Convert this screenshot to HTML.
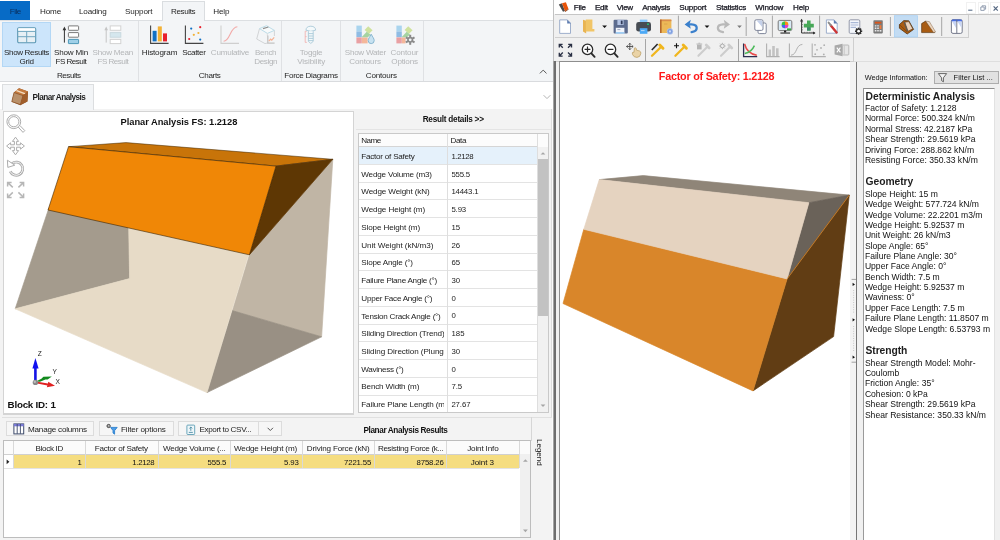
<!DOCTYPE html><html><head><meta charset="utf-8"><title>Planar Analysis</title><style>
html,body{margin:0;padding:0;}
body{width:1000px;height:540px;overflow:hidden;background:#fff;position:relative;font-family:"Liberation Sans",sans-serif;}
#w{position:absolute;left:0;top:0;width:1000px;height:540px;overflow:hidden;will-change:transform;}
.b{position:absolute;box-sizing:border-box;display:block;}
.t{position:absolute;white-space:pre;line-height:1;font-family:"Liberation Sans",sans-serif;}
.r{transform-origin:0 0;transform:rotate(90deg);}
</style></head><body><div id="w">
<div class="b" style="left:0px;top:0px;width:553px;height:540px;background:#f3f3f3;"></div>
<div class="b" style="left:0px;top:0px;width:553px;height:21px;background:#ffffff;"></div>
<div class="b" style="left:0px;top:1px;width:30px;height:19.5px;background:#076bc6;"></div>
<div class="b" style="left:0px;top:20px;width:553px;height:62px;background:#f3f5f7;border-top:1px solid #dcdfe2;border-bottom:1px solid #d9dbde;"></div>
<div class="b" style="left:162px;top:1px;width:42.5px;height:20px;background:#f3f5f7;border:1px solid #dadde0;border-bottom:none;"></div>
<div class="b" style="left:2px;top:22px;width:49.2px;height:44.6px;background:#cce5fb;border:1px solid #b3d7f5;"></div>
<div class="b" style="left:137.6px;top:21px;width:1px;height:60px;background:#dfe1e4;"></div>
<div class="b" style="left:281.4px;top:21px;width:1px;height:60px;background:#dfe1e4;"></div>
<div class="b" style="left:340.1px;top:21px;width:1px;height:60px;background:#dfe1e4;"></div>
<div class="b" style="left:422.6px;top:21px;width:1px;height:60px;background:#dfe1e4;"></div>
<svg class="b" style="left:16px;top:26px" width="22" height="19" viewBox="0 0 22 19"><rect x="1.7" y="1.7" width="18" height="15" rx="1.2" fill="#e7f0f5" stroke="#5a96b2" stroke-width="1.1"/><rect x="2.3" y="2.3" width="16.8" height="2.6" fill="#fff"/><path d="M1.7 5.4H19.7M1.7 10.7H19.7M10.7 5.4V16.7" stroke="#6fa6c0" stroke-width="1" fill="none"/></svg>
<svg class="b" style="left:60px;top:24px" width="22" height="22" viewBox="0 0 22 22"><path d="M4.4 18.6V4.2" stroke="#333" stroke-width="1"/><path d="M2.6 6.2L4.4 2.6L6.2 6.2Z" fill="#333"/><rect x="8.4" y="1.9" width="10.2" height="4.4" rx="0.6" fill="#fff" stroke="#7a7a7a" stroke-width="1"/><rect x="8.4" y="8.6" width="10.2" height="4.6" rx="0.6" fill="#fff" stroke="#7a7a7a" stroke-width="1"/><rect x="8.4" y="15.4" width="10.2" height="4.2" rx="0.3" fill="#9fd0e8" stroke="#4d98b8" stroke-width="1"/></svg>
<svg class="b" style="left:102px;top:24px" width="22" height="22" viewBox="0 0 22 22"><path d="M4.2 18.6V4.2" stroke="#c4c4c4" stroke-width="1"/><path d="M2.4 6.2L4.2 2.6L6 6.2Z" fill="#c4c4c4"/><rect x="8.2" y="1.9" width="10.6" height="4.4" fill="#fff" stroke="#d2d2d2" stroke-width="1"/><rect x="8.2" y="8.6" width="10.6" height="4.6" fill="#d5e7ee" stroke="#c9d9df" stroke-width="1"/><rect x="8.2" y="15.4" width="10.6" height="4.2" fill="#fff" stroke="#d2d2d2" stroke-width="1"/></svg>
<svg class="b" style="left:149px;top:24px" width="22" height="22" viewBox="0 0 22 22"><path d="M1.6 1.5V19.4H19.6" stroke="#444" stroke-width="1.1" fill="none"/><rect x="3.6" y="6.8" width="4" height="10.6" fill="#1170c4"/><rect x="8.8" y="2.4" width="4" height="15" fill="#f3b134"/><rect x="14" y="9.4" width="4" height="8" fill="#e8212d"/></svg>
<svg class="b" style="left:184px;top:24px" width="22" height="22" viewBox="0 0 22 22"><path d="M1.4 1.5V19.4H19.4" stroke="#444" stroke-width="1.1" fill="none"/><circle cx="7.2" cy="4.6" r="1.1" fill="#1170c4"/><circle cx="16.2" cy="3.2" r="1.1" fill="#e8212d"/><circle cx="9.8" cy="10.8" r="1.1" fill="#f3b134"/><circle cx="14.4" cy="9" r="1.1" fill="#f3b134"/><circle cx="5.2" cy="15" r="1.1" fill="#e8212d"/><circle cx="16.2" cy="15.6" r="1.1" fill="#1170c4"/></svg>
<svg class="b" style="left:219px;top:24px" width="22" height="22" viewBox="0 0 22 22"><path d="M2 1.5V19.4H20" stroke="#cfcfcf" stroke-width="1.1" fill="none"/><path d="M4.6 17.2C11.5 17 10.5 3.4 18.4 2.8" stroke="#f2aaa8" stroke-width="1.1" fill="none"/></svg>
<svg class="b" style="left:255px;top:24px" width="22" height="22" viewBox="0 0 22 22"><path d="M4.5 4.6L1.7 15L10 19.6L12.6 19" stroke="#d2d4d6" stroke-width="1" fill="none"/><path d="M19.4 6.4V12" stroke="#d2d4d6" stroke-width="1"/><path d="M4.5 4.6L11.5 1.7L19.4 6.4L12.4 9.4Z" stroke="#bcdce8" stroke-width="1" fill="#f8fafb"/><path d="M12.4 9.4V12" stroke="#d9dbdd" stroke-width="0.9"/><path d="M8 4.6L13.4 3" stroke="#8e8e8e" stroke-width="1.3"/><path d="M12.8 11.4V19.2H19.6" stroke="#c4c4c4" stroke-width="1.3" fill="none"/><path d="M13.8 17.2L15.6 15.2L16.8 16.2L19.2 13.4" stroke="#f4b295" stroke-width="1.2" fill="none"/></svg>
<svg class="b" style="left:301.4px;top:24px" width="18" height="22" viewBox="0 0 18 22"><path d="M5.8 7.2H4.2V18.4H5.8M4.2 12.6H5.6" stroke="#f1b4b2" stroke-width="0.9" fill="none"/><path d="M5 6.2Q5 2.4 9.8 2.2Q14.6 2.4 14.6 6.2Q9.8 8.4 5 6.2Z" fill="#f4f9fb" stroke="#a9cad8" stroke-width="0.9"/><path d="M7.4 7.2V17.4L9.8 19.4L12.2 17.4V7.2M7.4 9.6H12.2M7.4 12H12.2M7.4 14.4H12.2M7.4 16.6H12.2" stroke="#a9cad8" stroke-width="0.9" fill="#f4f9fb"/></svg>
<svg class="b" style="left:355px;top:24px" width="22" height="22" viewBox="0 0 22 22"><rect x="1.4" y="1.6" width="5.4" height="5.6" fill="#a9d4ee"/><rect x="1.4" y="7.4" width="5.4" height="5.8" fill="#8fbce4"/><rect x="1.4" y="13.4" width="5.4" height="6" fill="#e9a0a3"/><rect x="7" y="13.4" width="5.6" height="6" fill="#f4b79a"/><path d="M7 12.8L12 7.4L15.6 10.8L12.8 13.2H7Z" fill="#a5d3a2"/><path d="M9.6 6L13.2 2.2L17.6 6.2L14 9.8Z" fill="#cfe29e"/><path d="M16.2 10.2C17.6 13 19.2 14.6 19.2 16.6A3 3 0 0 1 13.2 16.6C13.2 14.6 14.8 13 16.2 10.2Z" fill="#c7e2f1" stroke="#7fb0cc" stroke-width="0.9"/></svg>
<svg class="b" style="left:394.5px;top:24px" width="22" height="22" viewBox="0 0 22 22"><rect x="1.4" y="1.6" width="5.4" height="5.6" fill="#a9d4ee"/><rect x="1.4" y="7.4" width="5.4" height="5.8" fill="#8fbce4"/><rect x="1.4" y="13.4" width="5.4" height="6" fill="#e9a0a3"/><rect x="7" y="13.4" width="3.6" height="6" fill="#f4b79a"/><path d="M7 12.8L12 7.4L15 10.4L12 13.2H7Z" fill="#a5d3a2"/><path d="M9.6 6L13.2 2.2L17.6 6.2L14 9.8Z" fill="#cfe29e"/><g transform="translate(15.2,15.8)" fill="#8a8a8a"><circle r="3"/><path d="M-1 -5H1V5H-1Z"/><path d="M-1 -5H1V5H-1Z" transform="rotate(60)"/><path d="M-1 -5H1V5H-1Z" transform="rotate(120)"/><circle r="1.4" fill="#f3f5f7"/></g></svg>
<svg class="b" style="left:538px;top:66px" width="11" height="11" viewBox="0 0 11 11"><path d="M1.9 7.4L5.2 4.1L8.5 7.4" stroke="#555" stroke-width="1" fill="none"/></svg>
<div class="b" style="left:0px;top:82px;width:553px;height:27.4px;background:#ffffff;"></div>
<svg class="b" style="left:541px;top:92px" width="12" height="10" viewBox="0 0 12 10"><path d="M2.6 3.2L6 6.6L9.4 3.2" stroke="#b4b4b4" stroke-width="1" fill="none"/></svg>
<div class="b" style="left:2px;top:84px;width:91.8px;height:25.5px;background:#f3f5f7;border:1px solid #dcdee0;border-bottom:none;"></div>
<svg class="b" style="left:10px;top:86px" width="20" height="22" viewBox="0 0 20 22"><path d="M4 6.6L9 2.2L18 5.6L17.4 15.6L10.4 19.2L1.6 15.8Z" fill="#8c4f22"/><path d="M4 6.6L9 2.2L18 5.6L13 9.6Z" fill="#c47a3e"/><path d="M5.8 5L7 3.9L15.6 7.2L14.4 8.3Z" fill="#f3dcc0"/><path d="M4 6.6L13 9.6L10.4 18.6L1.8 15.6Z" fill="#b9916b" stroke="#8c4f22" stroke-width="0.6"/><path d="M13 9.6L18 5.6L17.4 15.6L10.4 18.8Z" fill="#a05e2c"/></svg>
<div class="b" style="left:2.5px;top:110.6px;width:351.5px;height:303.4px;background:#ffffff;border:1px solid #d4d4d4;"></div>
<svg class="b" style="left:0px;top:0px" width="553" height="540" viewBox="0 0 553 540">
<g fill="none" stroke="#adadad" stroke-width="1">
<circle cx="13.8" cy="121.7" r="6.9"/><circle cx="13.8" cy="121.7" r="5.1"/><path d="M18.2 127L23 132.4L24.8 130.6L19.8 125.4"/>
<path d="M15.5 137.2L18.6 141.4H16.6V144.8H20.4V142.8L24.4 146L20.4 149.2V147.2H16.6V150.6H18.6L15.5 154.8L12.4 150.6H14.4V147.2H10.6V149.2L6.6 146L10.6 142.8V144.8H14.4V141.4H12.4Z"/>
<path d="M12 163.6A6.6 6.6 0 1 1 10.2 171.4" stroke-width="2.8"/><path d="M12 163.6A6.6 6.6 0 1 1 10.2 171.4" stroke="#fff" stroke-width="0.9"/>
<path d="M7.4 160.2L7.8 167.4L14.8 165.2Z" fill="#fff"/>
</g>
<g fill="none" stroke="#b6b6b6" stroke-width="1.5">
<path d="M7.6 186.4V182.4H11.6M7.8 182.6L12.8 187.4"/><path d="M19.6 182.4H23.6V186.4M23.4 182.6L18.4 187.4"/>
<path d="M7.6 193.4V197.4H11.6M7.8 197.2L12.8 192.4"/><path d="M19.6 197.4H23.6V193.4M23.4 197.2L18.4 192.4"/>
</g>
<polygon points="48.9,208 128.7,226 129.6,278.6 15.2,308.8" fill="#a49b8d" stroke="#a49b8d" stroke-width="0.7" stroke-linejoin="round"/>
<polygon points="332.8,159.3 321.6,336.8 232.4,310.6 249.4,254.8" fill="#c0b5a5" stroke="#c0b5a5" stroke-width="0.7" stroke-linejoin="round"/>
<polygon points="232.4,310.6 321.6,336.8 207,392.6" fill="#999084" stroke="#999084" stroke-width="0.7" stroke-linejoin="round"/>
<polygon points="128.7,226 249.4,252 207,392.6 15.2,308.8 129.6,278.6" fill="#e7dbc7" stroke="#e7dbc7" stroke-width="0.7" stroke-linejoin="round"/>
<polygon points="68.5,146.7 126,142.6 332.8,159.3 276,166.1" fill="#c87409" stroke="#3a2404" stroke-width="0.5"/>
<polygon points="276,166.1 332.8,159.3 249.4,254.8" fill="#5e3704" stroke="#5e3704" stroke-width="0.7" stroke-linejoin="round"/>
<polygon points="68.5,146.7 276,166.1 249.4,254.8 48,210" fill="#f08706" stroke="#3a2404" stroke-width="0.6"/>

<path d="M35.4 382V367" stroke="#1414e6" stroke-width="2.6"/><path d="M32.4 368.6L35.4 358L38.6 368.6Z" fill="#1010f0"/>
<path d="M36 381.4L41.4 378.8L43.4 376.8L51.8 376.4L47.6 379.6L45.4 379.4L40 381.8Z" fill="#128a1e"/>
<path d="M36 381.6L48 383.4L48.2 381.8L55 385.8L46.8 387.2L47.4 385.4L36 383.2Z" fill="#e02222"/>
<circle cx="35.4" cy="382.4" r="2.7" fill="#8a8a8a"/><circle cx="34.8" cy="381.8" r="1.2" fill="#bdbdbd"/>
</svg>
<div class="b" style="left:356px;top:129px;width:195.6px;height:1px;background:#e4e4e4;"></div>
<div class="b" style="left:551.4px;top:109.4px;width:0.9px;height:309px;background:#dcdcdc;"></div>
<div class="b" style="left:552.2px;top:109.4px;width:0.8px;height:430.6px;background:#fbfbfb;"></div>
<div class="b" style="left:358px;top:132.8px;width:190.60000000000002px;height:280.09999999999997px;background:#ffffff;border:1px solid #c9c9c9;"></div>
<div class="b" style="left:359px;top:133.8px;width:188.60000000000002px;height:13px;background:#fcfcfc;"></div>
<div class="b" style="left:359px;top:146.3px;width:179px;height:18.233px;background:#e5f1fb;"></div>
<div class="b" style="left:359px;top:146.3px;width:179.4px;height:1px;background:#d5d5d5;"></div>
<div class="b" style="left:359px;top:164.03300000000002px;width:179.4px;height:1px;background:#e3e3e3;"></div>
<div class="b" style="left:359px;top:181.76600000000002px;width:179.4px;height:1px;background:#e3e3e3;"></div>
<div class="b" style="left:359px;top:199.49900000000002px;width:179.4px;height:1px;background:#e3e3e3;"></div>
<div class="b" style="left:359px;top:217.23200000000003px;width:179.4px;height:1px;background:#e3e3e3;"></div>
<div class="b" style="left:359px;top:234.96500000000003px;width:179.4px;height:1px;background:#e3e3e3;"></div>
<div class="b" style="left:359px;top:252.698px;width:179.4px;height:1px;background:#e3e3e3;"></div>
<div class="b" style="left:359px;top:270.43100000000004px;width:179.4px;height:1px;background:#e3e3e3;"></div>
<div class="b" style="left:359px;top:288.164px;width:179.4px;height:1px;background:#e3e3e3;"></div>
<div class="b" style="left:359px;top:305.89700000000005px;width:179.4px;height:1px;background:#e3e3e3;"></div>
<div class="b" style="left:359px;top:323.63px;width:179.4px;height:1px;background:#e3e3e3;"></div>
<div class="b" style="left:359px;top:341.36300000000006px;width:179.4px;height:1px;background:#e3e3e3;"></div>
<div class="b" style="left:359px;top:359.096px;width:179.4px;height:1px;background:#e3e3e3;"></div>
<div class="b" style="left:359px;top:376.829px;width:179.4px;height:1px;background:#e3e3e3;"></div>
<div class="b" style="left:359px;top:394.562px;width:179.4px;height:1px;background:#e3e3e3;"></div>
<div class="b" style="left:447px;top:133.8px;width:1px;height:278.09999999999997px;background:#dedede;"></div>
<div class="b" style="left:537px;top:133.8px;width:1px;height:278.09999999999997px;background:#dedede;"></div>
<div class="b" style="left:538px;top:146.8px;width:10px;height:265.4px;background:#f1f1f1;"></div>
<div class="b" style="left:538.2px;top:159.3px;width:9.4px;height:156.8px;background:#c2c2c2;"></div>
<svg class="b" style="left:538px;top:149px" width="10" height="8" viewBox="0 0 10 8"><path d="M2.6 5.6L5 3.2L7.4 5.6Z" fill="#a6a6a6"/></svg>
<svg class="b" style="left:538px;top:402px" width="10" height="8" viewBox="0 0 10 8"><path d="M2.6 2.6L5 5L7.4 2.6Z" fill="#a6a6a6"/></svg>
<div class="b" style="left:2.5px;top:413.5px;width:351.5px;height:1px;background:#d4d4d4;"></div>
<div class="b" style="left:2px;top:417px;width:550px;height:1px;background:#e0e0e0;"></div>
<div class="b" style="left:5.6px;top:421.2px;width:88.80000000000001px;height:15.2px;background:#f6f6f6;border:1px solid #dcdcdc;"></div>
<div class="b" style="left:98.6px;top:421.2px;width:75.0px;height:15.2px;background:#f6f6f6;border:1px solid #dcdcdc;"></div>
<div class="b" style="left:177.8px;top:421.2px;width:81.59999999999997px;height:15.2px;background:#f6f6f6;border:1px solid #dcdcdc;"></div>
<div class="b" style="left:258.4px;top:421.2px;width:24.0px;height:15.2px;background:#f6f6f6;border:1px solid #dcdcdc;"></div>
<svg class="b" style="left:13px;top:423.4px" width="12" height="12" viewBox="0 0 12 12"><rect x="0.9" y="0.9" width="9.8" height="10" fill="#fff" stroke="#3c4a6a" stroke-width="1"/><rect x="0.9" y="0.9" width="9.8" height="2.4" fill="#7a7ad6"/><path d="M4.2 1V10.8M7.4 1V10.8" stroke="#3c4a6a" stroke-width="0.9"/></svg>
<svg class="b" style="left:106px;top:423px" width="12" height="12" viewBox="0 0 12 12"><circle cx="2.6" cy="3" r="1.6" fill="none" stroke="#333" stroke-width="1"/><circle cx="2.6" cy="3" r="0.5" fill="#333"/><path d="M4.6 4.4H11.2L8.6 7.6V11.2L7 10V7.6Z" fill="#4f9de6" stroke="#1f78cc" stroke-width="0.8"/></svg>
<svg class="b" style="left:185.6px;top:423.6px" width="10" height="12" viewBox="0 0 10 12"><rect x="0.9" y="1.1" width="7.8" height="9.4" rx="0.8" fill="#eef6f9" stroke="#4a93ac" stroke-width="0.8"/><path d="M4.8 3V6.8M3.4 4.4L4.8 3L6.2 4.4M2.8 8.4H6.8" stroke="#3a7f9a" stroke-width="0.8" fill="none"/></svg>
<svg class="b" style="left:266px;top:426.4px" width="9" height="7" viewBox="0 0 9 7"><path d="M1.6 1.8L4.3 4.5L7 1.8" stroke="#444" stroke-width="0.9" fill="none"/></svg>
<div class="b" style="left:2.8px;top:440.2px;width:528.6px;height:98.19999999999999px;background:#ffffff;border:1px solid #bdbdbd;"></div>
<div class="b" style="left:3.8px;top:441.2px;width:526.6px;height:13px;background:#fbfbfb;"></div>
<div class="b" style="left:3.8px;top:454px;width:526.6px;height:0.8px;background:#d0d0d0;"></div>
<div class="b" style="left:12.6px;top:454.6px;width:506.19999999999993px;height:13.8px;background:#f5dd80;"></div>
<div class="b" style="left:3.8px;top:468.2px;width:515.0px;height:0.8px;background:#e3e3e3;"></div>
<div class="b" style="left:12.6px;top:441.2px;width:1px;height:27.2px;background:#d9d9d9;"></div>
<div class="b" style="left:85.4px;top:441.2px;width:1px;height:27.2px;background:#d9d9d9;"></div>
<div class="b" style="left:157.5px;top:441.2px;width:1px;height:27.2px;background:#d9d9d9;"></div>
<div class="b" style="left:229.7px;top:441.2px;width:1px;height:27.2px;background:#d9d9d9;"></div>
<div class="b" style="left:301.9px;top:441.2px;width:1px;height:27.2px;background:#d9d9d9;"></div>
<div class="b" style="left:373.9px;top:441.2px;width:1px;height:27.2px;background:#d9d9d9;"></div>
<div class="b" style="left:446.3px;top:441.2px;width:1px;height:27.2px;background:#d9d9d9;"></div>
<div class="b" style="left:518.8px;top:441.2px;width:1px;height:27.2px;background:#d9d9d9;"></div>
<div class="b" style="left:519.6px;top:441.2px;width:10.8px;height:96px;background:#f0f0f0;"></div>
<div class="b" style="left:519.6px;top:441.2px;width:10.8px;height:13px;background:#fbfbfb;"></div>
<svg class="b" style="left:519.6px;top:456px" width="11" height="8" viewBox="0 0 11 8"><path d="M3 5.8L5.4 3.2L7.8 5.8Z" fill="#a6a6a6"/></svg>
<svg class="b" style="left:519.6px;top:527px" width="11" height="8" viewBox="0 0 11 8"><path d="M3 2.6L5.4 5.2L7.8 2.6Z" fill="#a6a6a6"/></svg>
<svg class="b" style="left:5px;top:458px" width="6" height="8" viewBox="0 0 6 8"><path d="M1.6 1.4L4.4 3.8L1.6 6.2Z" fill="#222"/></svg>
<div class="b" style="left:530.6px;top:417px;width:0.9px;height:24px;background:#d6d6d6;"></div>
<div class="b" style="left:553px;top:0px;width:447px;height:540px;background:#f0f0f0;"></div>
<div class="b" style="left:553px;top:0px;width:447px;height:14.4px;background:#ffffff;"></div>
<div class="b" style="left:552.8px;top:0px;width:1.4px;height:540px;background:#c2c2c2;"></div>
<div class="b" style="left:554.6px;top:14.4px;width:445.4px;height:0.9px;background:#c6c6c6;"></div>
<div class="b" style="left:554.6px;top:37.4px;width:414.4px;height:0.9px;background:#cfcfcf;"></div>
<div class="b" style="left:968.4px;top:15px;width:0.9px;height:23px;background:#cfcfcf;"></div>
<div class="b" style="left:554.6px;top:61px;width:299px;height:1px;background:#cfcfcf;"></div>
<div class="b" style="left:853.2px;top:38.4px;width:0.9px;height:23px;background:#cfcfcf;"></div>
<div class="b" style="left:854px;top:61.3px;width:146px;height:0.9px;background:#dedede;"></div>
<svg class="b" style="left:557px;top:0px" width="14" height="14" viewBox="0 0 14 14"><path d="M1.8 4.6L5 3.3L8 11.1L6 11.8Z" fill="#4a4a4a"/><path d="M5 3.3L8.9 2.3L11.4 8.7L8 11.2Z" fill="#e8540a"/><path d="M8 11.2L11.4 8.7L11.6 9.6L8.2 12Z" fill="#8a3a10"/></svg>
<div class="b" style="left:965.6px;top:2px;width:10.8px;height:11.8px;background:#ffffff;border:1px solid #f1f1f1;"></div>
<div class="b" style="left:977.8px;top:2px;width:10.8px;height:11.8px;background:#ffffff;border:1px solid #f1f1f1;"></div>
<div class="b" style="left:989.8px;top:2px;width:10.8px;height:11.8px;background:#ffffff;border:1px solid #f1f1f1;"></div>
<svg class="b" style="left:965px;top:1px" width="35" height="13" viewBox="0 0 35 13"><path d="M3.2 9.2H7.4" stroke="#5b6f8a" stroke-width="1.1"/><path d="M15.8 6H19.2V9.4H15.8Z M17 5.8V4.8H20.6V8.2H19.6" stroke="#7d8ca2" stroke-width="0.8" fill="none"/><path d="M28.6 5.4L32.8 9.6M32.8 5.4L28.6 9.6" stroke="#52657f" stroke-width="1.2"/></svg>
<div class="b" style="left:552.6px;top:61.2px;width:1px;height:479px;background:#a4a4a4;"></div>
<div class="b" style="left:554.1px;top:61.2px;width:1.6px;height:479px;background:#6e6e6e;"></div>
<div class="b" style="left:558.6px;top:61.3px;width:291.8px;height:478.7px;background:#ffffff;border:1.2px solid #8e8e8e;border-bottom:none;border-right:none;"></div>
<div class="b" style="left:850.4px;top:62px;width:5.4px;height:478px;background:#f3f3f3;"></div>
<div class="b" style="left:855.9px;top:62.4px;width:1.3px;height:478px;background:#767676;"></div>
<svg class="b" style="left:553px;top:0px" width="447" height="540" viewBox="553 0 447 540">
<path d="M559.7 19.9H567.4L570.5 23V33.4H559.7Z" fill="#fff" stroke="#93a6c6" stroke-width="0.9"/><path d="M567.2 19.8L570.8 23.4H567.2Z" fill="#5c7bb0"/>
<path d="M583 19.8L586.2 20.8V33.6L583 31.4Z" fill="#e9b452"/><path d="M585.8 19.6H592.4V29H594.4V31.4H585.8Z" fill="#f1c567"/>
<path d="M602.2 25.4H607L604.6 28Z" fill="#111"/>
<rect x="613.6" y="19.8" width="14.2" height="13.8" rx="1" fill="#5d6c8e"/><rect x="617.4" y="19.8" width="6.2" height="5.2" fill="#b4c4e4"/><rect x="620.8" y="20.6" width="1.8" height="3.6" fill="#2f3a58"/><rect x="615.8" y="27.8" width="8.6" height="5.8" fill="#f2f5fb"/><rect x="615.8" y="32.2" width="8.6" height="1.4" fill="#8cc4f2"/><path d="M617.4 29.6H620.4" stroke="#8a96b0" stroke-width="0.8"/>
<rect x="639.8" y="19.6" width="7.6" height="3.4" fill="#86c6fa"/><rect x="636.2" y="22" width="14.8" height="9.6" rx="2.4" fill="#474c53"/><rect x="639.8" y="28.2" width="7.6" height="5.6" fill="#4ba9f6"/><path d="M641 30.6H644.6" stroke="#cfe6fb" stroke-width="0.8"/><circle cx="648" cy="24.2" r="0.9" fill="#1fd27a"/>
<rect x="660" y="19.6" width="11.4" height="13.4" rx="0.8" fill="#ecb857"/><rect x="660" y="19.6" width="11.4" height="1.6" fill="#d98c4e"/><rect x="660" y="19.6" width="1.6" height="13.4" fill="#b4682c"/><path d="M664 24H667.4" stroke="#d9a04a" stroke-width="0.8"/><circle cx="670" cy="31.4" r="2.9" fill="#7f9fe0" stroke="#b9cbf0" stroke-width="0.6"/><circle cx="670" cy="31.4" r="1.1" fill="#c9d8f6"/>
<path d="M678.4 15.6V37.4" stroke="#a6a6a6" stroke-width="1"/>
<path d="M690.8 19.8L684.6 24.4L690.8 28.8L690 25.6L688.6 24.4L690 23Z" fill="#3b80cc"/><path d="M688 24.3H691.6Q696.7 24.5 696.7 28.1Q696.7 31.6 691.6 32.1" stroke="#3b80cc" stroke-width="2.3" fill="none" stroke-linecap="round"/>
<path d="M704.6 25.4H709.4L707 28Z" fill="#111"/>
<path d="M723.8 19.8L730 24.4L723.8 28.8L724.6 25.6L726 24.4L724.6 23Z" fill="#b9b9b9"/><path d="M726.6 24.3H723Q717.9 24.5 717.9 28.1Q717.9 31.6 723 32.1" stroke="#b9b9b9" stroke-width="2.3" fill="none" stroke-linecap="round"/>
<path d="M737.2 25.4H741.8L739.5 28Z" fill="#7a7a7a"/>
<path d="M746.2 17V36" stroke="#a6a6a6" stroke-width="1"/>
<rect x="758" y="23" width="8.2" height="10.6" rx="1.4" fill="#fff" stroke="#70788f" stroke-width="0.9"/><rect x="754.8" y="19.8" width="8.2" height="10.6" rx="1.4" fill="#fff" stroke="#70788f" stroke-width="0.9"/><path d="M756.6 20.6H762.2V27Z" fill="#c4d0ea"/>
<path d="M772.4 15.6V37.4" stroke="#a6a6a6" stroke-width="1"/>
<rect x="778.2" y="20.4" width="13.6" height="10.2" rx="1.4" fill="#d9ebf7" stroke="#777" stroke-width="1"/>
<circle cx="785" cy="24.9" r="3.3" fill="#ffd21c"/><path d="M785 24.9L785 21.6A3.3 3.3 0 0 1 788.3 24.9Z" fill="#ff8a1c"/><path d="M785 24.9L788.3 24.9A3.3 3.3 0 0 1 785 28.2Z" fill="#e23bd0"/><path d="M785 24.9L785 28.2A3.3 3.3 0 0 1 781.7 24.9Z" fill="#3a6cf0"/><path d="M785 24.9L781.7 24.9A3.3 3.3 0 0 1 785 21.6Z" fill="#36c24a"/>
<rect x="787" y="28.4" width="4" height="1.8" fill="#2fae3c"/><rect x="784" y="30.6" width="2.2" height="2" fill="#222"/><rect x="780.4" y="32.4" width="9.6" height="1.3" fill="#444"/>
<path d="M801.6 19.6V33H815" stroke="#333" stroke-width="1" fill="none"/><path d="M800 21.4L801.6 18.8L803.2 21.4Z M813 31.4L815.6 33L813 34.6Z" fill="#333"/><path d="M801.6 22H803M801.6 24.6H803M801.6 27.2H803M801.6 29.8H803M804.6 33V31.8M807.2 33V31.8M809.8 33V31.8M812 33V31.8" stroke="#555" stroke-width="0.6"/>
<path d="M807 20.6H810.6V23.8H813.8V27.4H810.6V30.6H807V27.4H803.8V23.8H807Z" fill="#47a857"/><path d="M807 27.4H810.6V30.6H807Z" fill="#3d8a68"/>
<path d="M819.6 15.6V37.4" stroke="#a6a6a6" stroke-width="1"/>
<path d="M826.4 19.9H834L837.2 23V33.2H826.4Z" fill="#fff" stroke="#93a6c6" stroke-width="0.9"/><path d="M833.8 19.8L837.4 23.4H833.8Z" fill="#5c7bb0"/><path d="M830.8 25.4L836.6 32.4" stroke="#cc3434" stroke-width="2.4" stroke-linecap="round"/><path d="M828.6 22.6L830.8 25.2" stroke="#8c8c8c" stroke-width="2" stroke-linecap="round"/>
<rect x="849.2" y="19.8" width="10.6" height="13.6" rx="1.2" fill="#f4f7fc" stroke="#8a90a2" stroke-width="0.9"/><path d="M850.6 22.6H858.4M850.6 25H858.4M850.6 27.4H856" stroke="#a9b8d6" stroke-width="1.1"/>
<g transform="translate(858.6,31.2)"><g fill="#2e2e2e"><circle r="2.6"/><path d="M-0.8 -3.6H0.8V3.6H-0.8Z"/><path d="M-0.8 -3.6H0.8V3.6H-0.8Z" transform="rotate(45)"/><path d="M-0.8 -3.6H0.8V3.6H-0.8Z" transform="rotate(90)"/><path d="M-0.8 -3.6H0.8V3.6H-0.8Z" transform="rotate(135)"/></g><circle r="1.4" fill="#fff"/></g>
<rect x="873.4" y="20.2" width="9.4" height="13.2" rx="0.8" fill="#7b7b7b"/><rect x="874.8" y="21.8" width="6.6" height="1.8" fill="#d9561c"/><path d="M874.8 25.2H876.4V26.6H874.8ZM877.2 25.2H878.8V26.6H877.2ZM874.8 27.6H876.4V29H874.8ZM877.2 27.6H878.8V29H877.2ZM874.8 30H876.4V31.6H874.8ZM877.2 30H878.8V31.6H877.2Z" fill="#e9e9e9"/><path d="M879.6 25.2H881.4V29H879.6Z" fill="#f07a3a"/><path d="M879.6 30H881.4V31.6H879.6Z" fill="#e9e9e9"/>
<path d="M890.4 17V36" stroke="#a6a6a6" stroke-width="1"/>
<rect x="894.4" y="15.7" width="23" height="21.3" fill="#c3dcf3" stroke="#a9d1f6" stroke-width="0.8"/>
<path d="M899.4 24.6L903.8 20.6L908.8 20.8L913.6 29.4L907.2 34L899.4 28.2Z" fill="#a95c12" stroke="#4a2a08" stroke-width="0.7" stroke-linejoin="round"/><path d="M904.8 22.2L908.8 21.6L912.8 28.8L908 31.2Z" fill="#e9d2bc" stroke="#4a2a08" stroke-width="0.5"/><path d="M903.4 21.6L904.8 22.2L908 31.2L906.8 31.6Z" fill="#5a5a5a"/><path d="M899.4 24.6L906.8 31.6" stroke="#6a3a0c" stroke-width="0.6"/>
<path d="M921.6 23.6L925.6 21.1L934.6 32.6H921.6Z" fill="#a95c12" stroke="#4a2a08" stroke-width="0.6" stroke-linejoin="round"/><path d="M925.6 21.1L929.4 21.6L935.6 32L933.6 32.6Z" fill="#ecd6c0" stroke="#6a4a2a" stroke-width="0.4"/>
<path d="M941.7 17V36" stroke="#a6a6a6" stroke-width="1"/>
<rect x="951.4" y="19.6" width="10.8" height="13.8" rx="1.6" fill="#fff" stroke="#666c80" stroke-width="0.9"/><path d="M951.6 21.6V20.8Q951.6 19.6 953 19.6H960.6Q962 19.6 962 20.8V21.6Z" fill="#4a6fe2"/><path d="M952 21.6H956V28Z M957.4 21.6H961.6V28Z" fill="#c9d6f4"/><path d="M956.8 20V33.2" stroke="#666c80" stroke-width="0.9"/>

<g fill="none" stroke="#2a3044" stroke-width="1.35"><path d="M562.8 47.8L559.8 44.8M559.3 47.6V44.3H562.6"/><path d="M568 47.8L571 44.8M571.5 47.6V44.3H568.2"/><path d="M562.8 52.6L559.8 55.6M559.3 52.8V56.1H562.6"/><path d="M568 52.6L571 55.6M571.5 52.8V56.1H568.2"/></g>
<circle cx="587.5" cy="49.4" r="5.2" fill="#fff" stroke="#2b2b2b" stroke-width="1.3"/><path d="M584.6 49.4H590.4M587.5 46.5V52.3" stroke="#2b2b2b" stroke-width="1.2"/><path d="M591.4 53.4L594.6 56.8" stroke="#2b2b2b" stroke-width="1.9" stroke-linecap="round"/>
<circle cx="610.5" cy="49.4" r="5.2" fill="#fff" stroke="#2b2b2b" stroke-width="1.3"/><path d="M607.6 49.4H613.4" stroke="#2b2b2b" stroke-width="1.2"/><path d="M614.4 53.4L617.6 56.8" stroke="#2b2b2b" stroke-width="1.9" stroke-linecap="round"/>
<path d="M629.8 43.4V49.6M626.6 46.5H633" stroke="#4a4a4a" stroke-width="0.9"/><path d="M628.6 44.6L629.8 43.2L631 44.6M628.6 48.4L629.8 49.8L631 48.4M627.8 45.3L626.4 46.5L627.8 47.7M631.8 45.3L633.2 46.5L631.8 47.7" stroke="#4a4a4a" stroke-width="0.8" fill="none"/>
<path d="M634.4 48.2Q635.6 47 636.2 48.6L636.6 50.2L639.6 51Q641.2 51.6 640.8 53.6Q640.4 57.2 637 57.4Q633.6 57.4 632.6 54.6Q631.8 52.6 633 52L634 52.4Z" fill="#ead3a6" stroke="#b8995c" stroke-width="0.7"/>
<path d="M645.5 39V61" stroke="#a6a6a6" stroke-width="1"/>
<path d="M652 55.8L661 47" stroke="#f0b61e" stroke-width="2.3" stroke-linecap="round"/><path d="M659.8 45L663 48.2" stroke="#f0b61e" stroke-width="2.9" stroke-linecap="round"/><path d="M651.8 50L657.6 44" stroke="#2a2a2a" stroke-width="1.6"/>
<path d="M675.4 55.8L684.2 47" stroke="#f0b61e" stroke-width="2.3" stroke-linecap="round"/><path d="M683.2 45L686.4 48.2" stroke="#f0b61e" stroke-width="2.9" stroke-linecap="round"/><path d="M674 45.8H679M676.5 43.3V48.3" stroke="#111" stroke-width="1.1"/>
<path d="M698.4 55.8L707.2 47" stroke="#cdcdcd" stroke-width="2.1" stroke-linecap="round"/><path d="M706.2 45L709.2 48" stroke="#cdcdcd" stroke-width="2.7" stroke-linecap="round"/><path d="M697 44.6H701.6V49.4H697Z" fill="#b4b4b4"/><path d="M696.4 44H702.2M698.4 43.2H700.2" stroke="#b4b4b4" stroke-width="0.9"/>
<path d="M721 55.8L729.8 47" stroke="#cdcdcd" stroke-width="2.1" stroke-linecap="round"/><path d="M728.8 45L731.8 48" stroke="#cdcdcd" stroke-width="2.7" stroke-linecap="round"/><g transform="translate(722.4,46)" stroke="#a8a8a8" fill="none"><circle r="1.9" stroke-width="0.9"/><path d="M0 -3.2V-2M0 3.2V2M-3.2 0H-2M3.2 0H2M-2.3 -2.3L-1.5 -1.5M2.3 2.3L1.5 1.5M-2.3 2.3L-1.5 1.5M2.3 -2.3L1.5 -1.5" stroke-width="0.8"/></g>
<path d="M738.5 39V61" stroke="#a6a6a6" stroke-width="1"/>
<path d="M743.6 43.4V56.6H757.2" stroke="#2c3050" stroke-width="1.3" fill="none"/><path d="M744.6 44Q747 53.6 756.8 55.2" stroke="#e84a4a" stroke-width="1.5" fill="none"/><path d="M744.8 53.6Q751.6 52 754.4 45.6" stroke="#4cba5a" stroke-width="1.5" fill="none"/>
<path d="M766.6 43.4V56.6H779.6" stroke="#b0b0b0" stroke-width="1.1" fill="none"/><path d="M768.6 49.6H771V56H768.6ZM772.2 46H774.8V56H772.2ZM776 48.2H778.6V56H776Z" fill="#c2c2c2"/>
<path d="M789.4 43.4V56.6H803" stroke="#b0b0b0" stroke-width="1.1" fill="none"/><path d="M791 55.2C797.4 54.8 795.4 44.8 802.4 44.4" stroke="#b0b0b0" stroke-width="1" fill="none"/>
<path d="M812.2 43.4V56.6H825.8" stroke="#b0b0b0" stroke-width="1.1" fill="none"/><g fill="#b0b0b0"><circle cx="815" cy="44.8" r="0.9"/><circle cx="824.2" cy="45.2" r="0.9"/><circle cx="821" cy="48" r="0.9"/><circle cx="817" cy="49.8" r="0.9"/><circle cx="815.2" cy="54.2" r="0.9"/><circle cx="823.8" cy="54.4" r="0.9"/></g>
<path d="M834.6 45.6L842.6 43.8V56.2L834.6 54.4Z" fill="#a9a9a9"/><rect x="842.6" y="45" width="6.2" height="10" rx="0.8" fill="#e6e6e6" stroke="#b4b4b4" stroke-width="0.9"/><path d="M844.4 45.4V54.6" stroke="#c6c6c6" stroke-width="0.8"/><path d="M836.8 47.6L840.4 52.4M840.4 47.6L836.8 52.4" stroke="#fff" stroke-width="1.1"/>

<polygon points="599.3,179.6 643.3,175.6 849.3,195.1 808.9,202.7" fill="#8f8578" stroke="#8f8578" stroke-width="0.7" stroke-linejoin="round"/>
<polygon points="808.9,202.7 849.3,195.1 787.1,278.9" fill="#6a6259" stroke="#6a6259" stroke-width="0.7" stroke-linejoin="round"/>
<polygon points="849.3,195.1 833.6,336.6 753,390.9 787.1,278.9" fill="#613d14" stroke="#613d14" stroke-width="0.7" stroke-linejoin="round"/>
<polygon points="583.8,229.3 787.1,278.9 753,390.9 563,303.5" fill="#d9862a" stroke="#d9862a" stroke-width="0.7" stroke-linejoin="round"/>
<polygon points="599.3,179.6 808.9,202.7 787.1,278.9 583.8,229.3" fill="#e5d3c0" stroke="#e5d3c0" stroke-width="0.7" stroke-linejoin="round"/>
<path d="M849.3 195.1L787.1 278.9" stroke="#d9862a" stroke-width="0.8"/>

<path d="M851.6 279.4H856M851.6 362.2H856" stroke="#8a8a8a" stroke-width="0.8"/>
<path d="M852.6 282.8L855 284.4L852.6 286Z M852.6 318.2L855 319.8L852.6 321.4Z M852.6 355.6L855 357.2L852.6 358.8Z" fill="#111"/>
<path d="M853.6 290V314M853.6 326V351" stroke="#b4b4b4" stroke-width="0.7" stroke-dasharray="1 1.4"/>
</svg>
<div class="b" style="left:934.4px;top:70.6px;width:64.2px;height:13.4px;background:#e1e1e1;border:1px solid #adadad;"></div>
<svg class="b" style="left:936.6px;top:71.6px" width="11" height="11" viewBox="0 0 11 11"><path d="M1.4 1.6H9.6L6.4 5.8V9.8L4.6 8.6V5.8Z" fill="#f4f4f4" stroke="#444" stroke-width="0.8" stroke-linejoin="round"/></svg>
<div class="b" style="left:863.2px;top:88px;width:131.6px;height:452px;background:#ffffff;border-left:1px solid #9a9a9a;border-top:1px solid #8e8e8e;border-right:1px solid #e2e2e2;"></div>
<span class="t" style="left:9.70px;top:8.00px;font-size:8.1px;color:#0a2f5e;letter-spacing:-0.462px;">File</span>
<span class="t" style="left:40.00px;top:8.00px;font-size:8.1px;color:#262626;letter-spacing:-0.148px;">Home</span>
<span class="t" style="left:79.00px;top:8.00px;font-size:8.1px;color:#262626;letter-spacing:-0.188px;">Loading</span>
<span class="t" style="left:125.00px;top:8.00px;font-size:8.1px;color:#262626;letter-spacing:-0.123px;">Support</span>
<span class="t" style="left:171.00px;top:8.00px;font-size:8.1px;color:#262626;letter-spacing:-0.400px;">Results</span>
<span class="t" style="left:213.20px;top:8.00px;font-size:8.1px;color:#262626;letter-spacing:-0.089px;">Help</span>
<span class="t" style="left:4.00px;top:49.00px;font-size:8.1px;color:#262626;letter-spacing:-0.374px;">Show Results</span>
<span class="t" style="left:19.40px;top:58.00px;font-size:8.1px;color:#262626;letter-spacing:-0.199px;">Grid</span>
<span class="t" style="left:54.00px;top:49.00px;font-size:8.1px;color:#262626;letter-spacing:-0.193px;">Show Min</span>
<span class="t" style="left:55.60px;top:58.00px;font-size:8.1px;color:#262626;letter-spacing:-0.550px;">FS Result</span>
<span class="t" style="left:92.60px;top:49.00px;font-size:8.1px;color:#b4b6b8;letter-spacing:-0.261px;">Show Mean</span>
<span class="t" style="left:97.60px;top:58.00px;font-size:8.1px;color:#b4b6b8;letter-spacing:-0.550px;">FS Result</span>
<span class="t" style="left:56.90px;top:72.00px;font-size:8.1px;color:#262626;letter-spacing:-0.457px;">Results</span>
<span class="t" style="left:141.80px;top:49.00px;font-size:8.1px;color:#262626;letter-spacing:-0.155px;">Histogram</span>
<span class="t" style="left:182.30px;top:49.00px;font-size:8.1px;color:#262626;letter-spacing:-0.351px;">Scatter</span>
<span class="t" style="left:210.80px;top:49.00px;font-size:8.1px;color:#b4b6b8;letter-spacing:-0.230px;">Cumulative</span>
<span class="t" style="left:255.00px;top:49.00px;font-size:8.1px;color:#b4b6b8;letter-spacing:-0.331px;">Bench</span>
<span class="t" style="left:254.30px;top:58.00px;font-size:8.1px;color:#b4b6b8;letter-spacing:-0.401px;">Design</span>
<span class="t" style="left:198.80px;top:72.00px;font-size:8.1px;color:#262626;letter-spacing:-0.357px;">Charts</span>
<span class="t" style="left:299.80px;top:49.00px;font-size:8.1px;color:#b4b6b8;letter-spacing:-0.227px;">Toggle</span>
<span class="t" style="left:297.20px;top:58.00px;font-size:8.1px;color:#b4b6b8;letter-spacing:-0.109px;">Visibility</span>
<span class="t" style="left:284.30px;top:72.00px;font-size:8.1px;color:#262626;letter-spacing:-0.298px;">Force Diagrams</span>
<span class="t" style="left:344.80px;top:49.00px;font-size:8.1px;color:#b4b6b8;letter-spacing:-0.278px;">Show Water</span>
<span class="t" style="left:349.30px;top:58.00px;font-size:8.1px;color:#b4b6b8;letter-spacing:-0.168px;">Contours</span>
<span class="t" style="left:390.50px;top:49.00px;font-size:8.1px;color:#b4b6b8;letter-spacing:-0.142px;">Contour</span>
<span class="t" style="left:391.30px;top:58.00px;font-size:8.1px;color:#b4b6b8;letter-spacing:-0.201px;">Options</span>
<span class="t" style="left:365.80px;top:72.00px;font-size:8.1px;color:#262626;letter-spacing:-0.230px;">Contours</span>
<span class="t" style="left:32.60px;top:94.00px;font-size:8.2px;color:#222;font-weight:bold;letter-spacing:-0.539px;">Planar Analysis</span>
<span class="t" style="left:120.50px;top:118.00px;font-size:9.3px;color:#111;font-weight:bold;letter-spacing:-0.026px;">Planar Analysis FS: 1.2128</span>
<span class="t" style="left:37.78px;top:351.00px;font-size:6.6px;color:#222;letter-spacing:0.000px;">Z</span>
<span class="t" style="left:52.60px;top:369.00px;font-size:6.6px;color:#222;letter-spacing:0.000px;">Y</span>
<span class="t" style="left:55.60px;top:379.00px;font-size:6.6px;color:#222;letter-spacing:0.000px;">X</span>
<span class="t" style="left:7.60px;top:400.00px;font-size:9.8px;color:#111;font-weight:bold;letter-spacing:-0.240px;">Block ID: 1</span>
<span class="t" style="left:422.70px;top:116.00px;font-size:8.2px;color:#111;font-weight:bold;letter-spacing:-0.240px;">Result details &gt;&gt;</span>
<span class="t" style="left:361.20px;top:137.00px;font-size:8.1px;color:#222;letter-spacing:-0.498px;">Name</span>
<span class="t" style="left:450.60px;top:137.00px;font-size:8.1px;color:#222;letter-spacing:-0.427px;">Data</span>
<span class="t" style="left:361.30px;top:153.00px;font-size:8.1px;color:#222;letter-spacing:-0.234px;">Factor of Safety</span>
<span class="t" style="left:451.40px;top:153.00px;font-size:7.8px;color:#222;letter-spacing:-0.343px;">1.2128</span>
<span class="t" style="left:361.30px;top:171.00px;font-size:8.1px;color:#222;letter-spacing:-0.179px;">Wedge Volume (m3)</span>
<span class="t" style="left:451.40px;top:171.00px;font-size:7.8px;color:#222;letter-spacing:-0.183px;">555.5</span>
<span class="t" style="left:361.30px;top:188.00px;font-size:8.1px;color:#222;letter-spacing:-0.125px;">Wedge Weight (kN)</span>
<span class="t" style="left:451.40px;top:188.00px;font-size:7.8px;color:#222;letter-spacing:-0.184px;">14443.1</span>
<span class="t" style="left:361.30px;top:206.00px;font-size:8.1px;color:#222;letter-spacing:-0.108px;">Wedge Height (m)</span>
<span class="t" style="left:451.40px;top:206.00px;font-size:7.8px;color:#222;letter-spacing:-0.122px;">5.93</span>
<span class="t" style="left:361.30px;top:224.00px;font-size:8.1px;color:#222;letter-spacing:-0.127px;">Slope Height (m)</span>
<span class="t" style="left:451.40px;top:224.00px;font-size:7.8px;color:#222;letter-spacing:0.056px;">15</span>
<span class="t" style="left:361.30px;top:242.00px;font-size:8.1px;color:#222;letter-spacing:-0.033px;">Unit Weight (kN/m3)</span>
<span class="t" style="left:451.40px;top:242.00px;font-size:7.8px;color:#222;letter-spacing:0.056px;">26</span>
<span class="t" style="left:361.30px;top:259.00px;font-size:8.1px;color:#222;letter-spacing:-0.166px;">Slope Angle (°)</span>
<span class="t" style="left:451.40px;top:259.00px;font-size:7.8px;color:#222;letter-spacing:0.056px;">65</span>
<span class="t" style="left:361.30px;top:277.00px;font-size:8.1px;color:#222;letter-spacing:-0.238px;">Failure Plane Angle (°)</span>
<span class="t" style="left:451.40px;top:277.00px;font-size:7.8px;color:#222;letter-spacing:0.056px;">30</span>
<span class="t" style="left:361.30px;top:295.00px;font-size:8.1px;color:#222;letter-spacing:-0.244px;">Upper Face Angle (°)</span>
<span class="t" style="left:451.40px;top:295.00px;font-size:7.8px;color:#222;letter-spacing:0.456px;">0</span>
<span class="t" style="left:361.30px;top:313.00px;font-size:8.1px;color:#222;letter-spacing:-0.234px;">Tension Crack Angle (°)</span>
<span class="t" style="left:451.40px;top:312.00px;font-size:7.8px;color:#222;letter-spacing:0.456px;">0</span>
<span class="t" style="left:361.30px;top:330.00px;font-size:8.1px;color:#222;letter-spacing:-0.150px;width:83.2px;overflow:hidden;padding-bottom:3px;">Sliding Direction (Trend)</span>
<span class="t" style="left:451.40px;top:330.00px;font-size:7.8px;color:#222;letter-spacing:0.128px;">185</span>
<span class="t" style="left:361.30px;top:348.00px;font-size:8.1px;color:#222;letter-spacing:-0.070px;width:83.2px;overflow:hidden;padding-bottom:3px;">Sliding Direction (Plunge)</span>
<span class="t" style="left:451.40px;top:348.00px;font-size:7.8px;color:#222;letter-spacing:0.056px;">30</span>
<span class="t" style="left:361.30px;top:366.00px;font-size:8.1px;color:#222;letter-spacing:-0.289px;">Waviness (°)</span>
<span class="t" style="left:451.40px;top:366.00px;font-size:7.8px;color:#222;letter-spacing:0.456px;">0</span>
<span class="t" style="left:361.30px;top:383.00px;font-size:8.1px;color:#222;letter-spacing:-0.159px;">Bench Width (m)</span>
<span class="t" style="left:451.40px;top:383.00px;font-size:7.8px;color:#222;letter-spacing:-0.015px;">7.5</span>
<span class="t" style="left:361.30px;top:401.00px;font-size:8.1px;color:#222;letter-spacing:-0.120px;width:83.2px;overflow:hidden;padding-bottom:3px;">Failure Plane Length (m)</span>
<span class="t" style="left:451.40px;top:401.00px;font-size:7.8px;color:#222;letter-spacing:-0.103px;">27.67</span>
<span class="t" style="left:28.00px;top:426.00px;font-size:8.1px;color:#222;letter-spacing:-0.203px;">Manage columns</span>
<span class="t" style="left:121.00px;top:426.00px;font-size:8.1px;color:#222;letter-spacing:-0.110px;">Filter options</span>
<span class="t" style="left:199.40px;top:426.00px;font-size:8.1px;color:#222;letter-spacing:-0.344px;">Export to CSV...</span>
<span class="t" style="left:363.40px;top:427.00px;font-size:8.2px;color:#111;font-weight:bold;letter-spacing:-0.367px;">Planar Analysis Results</span>
<span class="t" style="left:35.60px;top:445.00px;font-size:8.1px;color:#222;letter-spacing:-0.343px;">Block ID</span>
<span class="t" style="left:94.70px;top:445.00px;font-size:8.1px;color:#222;letter-spacing:-0.246px;">Factor of Safety</span>
<span class="t" style="left:163.00px;top:445.00px;font-size:8.1px;color:#222;letter-spacing:-0.237px;">Wedge Volume (...</span>
<span class="t" style="left:234.00px;top:445.00px;font-size:8.1px;color:#222;letter-spacing:-0.158px;">Wedge Height (m)</span>
<span class="t" style="left:306.80px;top:445.00px;font-size:8.1px;color:#222;letter-spacing:-0.164px;">Driving Force (kN)</span>
<span class="t" style="left:377.90px;top:445.00px;font-size:8.1px;color:#222;letter-spacing:-0.308px;">Resisting Force (k...</span>
<span class="t" style="left:467.20px;top:445.00px;font-size:8.1px;color:#222;letter-spacing:-0.156px;">Joint Info</span>
<span class="t" style="left:77.41px;top:459.00px;font-size:7.8px;color:#111;letter-spacing:-0.250px;">1</span>
<span class="t" style="left:132.30px;top:459.00px;font-size:7.8px;color:#111;letter-spacing:-0.310px;">1.2128</span>
<span class="t" style="left:207.50px;top:459.00px;font-size:7.8px;color:#111;letter-spacing:-0.143px;">555.5</span>
<span class="t" style="left:283.90px;top:459.00px;font-size:7.8px;color:#111;letter-spacing:-0.097px;">5.93</span>
<span class="t" style="left:344.00px;top:459.00px;font-size:7.8px;color:#111;letter-spacing:-0.141px;">7221.55</span>
<span class="t" style="left:416.50px;top:459.00px;font-size:7.8px;color:#111;letter-spacing:-0.141px;">8758.26</span>
<span class="t" style="left:470.70px;top:459.00px;font-size:8.1px;color:#111;letter-spacing:-0.094px;">Joint 3</span>
<span class="t r" style="left:543.20px;top:439.00px;font-size:8.1px;color:#222;letter-spacing:-0.050px;">Legend</span>
<span class="t" style="left:573.80px;top:4.00px;font-size:8.1px;color:#15151f;letter-spacing:-0.312px;-webkit-text-stroke:0.25px #15151f;">File</span>
<span class="t" style="left:595.00px;top:4.00px;font-size:8.1px;color:#15151f;letter-spacing:-0.338px;-webkit-text-stroke:0.25px #15151f;">Edit</span>
<span class="t" style="left:616.80px;top:4.00px;font-size:8.1px;color:#15151f;letter-spacing:-0.352px;-webkit-text-stroke:0.25px #15151f;">View</span>
<span class="t" style="left:642.20px;top:4.00px;font-size:8.1px;color:#15151f;letter-spacing:-0.293px;-webkit-text-stroke:0.25px #15151f;">Analysis</span>
<span class="t" style="left:679.30px;top:4.00px;font-size:8.1px;color:#15151f;letter-spacing:-0.180px;-webkit-text-stroke:0.25px #15151f;">Support</span>
<span class="t" style="left:716.00px;top:4.00px;font-size:8.1px;color:#15151f;letter-spacing:-0.239px;-webkit-text-stroke:0.25px #15151f;">Statistics</span>
<span class="t" style="left:755.20px;top:4.00px;font-size:8.1px;color:#15151f;letter-spacing:-0.116px;-webkit-text-stroke:0.25px #15151f;">Window</span>
<span class="t" style="left:793.00px;top:4.00px;font-size:8.1px;color:#15151f;letter-spacing:-0.139px;-webkit-text-stroke:0.25px #15151f;">Help</span>
<span class="t" style="left:658.80px;top:71.00px;font-size:10.8px;color:#ff1818;font-weight:bold;letter-spacing:-0.234px;">Factor of Safety: 1.2128</span>
<span class="t" style="left:864.80px;top:74.00px;font-size:7.4px;color:#111;letter-spacing:-0.088px;">Wedge Information:</span>
<span class="t" style="left:953.60px;top:74.00px;font-size:7.4px;color:#111;letter-spacing:0.066px;">Filter List ...</span>
<span class="t" style="left:865.60px;top:92.00px;font-size:10.3px;color:#1e1e1e;font-weight:bold;letter-spacing:-0.031px;">Deterministic Analysis</span>
<span class="t" style="left:864.90px;top:104.00px;font-size:8.58px;color:#111;letter-spacing:0.000px;">Factor of Safety: 1.2128</span>
<span class="t" style="left:864.90px;top:114.00px;font-size:8.58px;color:#111;letter-spacing:0.000px;">Normal Force: 500.324 kN/m</span>
<span class="t" style="left:864.90px;top:125.00px;font-size:8.58px;color:#111;letter-spacing:0.000px;">Normal Stress: 42.2187 kPa</span>
<span class="t" style="left:864.90px;top:135.00px;font-size:8.58px;color:#111;letter-spacing:0.000px;">Shear Strength: 29.5619 kPa</span>
<span class="t" style="left:864.90px;top:146.00px;font-size:8.58px;color:#111;letter-spacing:0.000px;">Driving Force: 288.862 kN/m</span>
<span class="t" style="left:864.90px;top:156.00px;font-size:8.58px;color:#111;letter-spacing:0.000px;">Resisting Force: 350.33 kN/m</span>
<span class="t" style="left:865.60px;top:177.00px;font-size:10.3px;color:#1e1e1e;font-weight:bold;letter-spacing:-0.060px;">Geometry</span>
<span class="t" style="left:864.90px;top:190.00px;font-size:8.58px;color:#111;letter-spacing:0.000px;">Slope Height: 15 m</span>
<span class="t" style="left:864.90px;top:200.00px;font-size:8.58px;color:#111;letter-spacing:0.000px;">Wedge Weight: 577.724 kN/m</span>
<span class="t" style="left:864.90px;top:211.00px;font-size:8.58px;color:#111;letter-spacing:0.000px;">Wedge Volume: 22.2201 m3/m</span>
<span class="t" style="left:864.90px;top:221.00px;font-size:8.58px;color:#111;letter-spacing:0.000px;">Wedge Height: 5.92537 m</span>
<span class="t" style="left:864.90px;top:231.00px;font-size:8.58px;color:#111;letter-spacing:0.000px;">Unit Weight: 26 kN/m3</span>
<span class="t" style="left:864.90px;top:242.00px;font-size:8.58px;color:#111;letter-spacing:0.000px;">Slope Angle: 65°</span>
<span class="t" style="left:864.90px;top:252.00px;font-size:8.58px;color:#111;letter-spacing:0.000px;">Failure Plane Angle: 30°</span>
<span class="t" style="left:864.90px;top:262.00px;font-size:8.58px;color:#111;letter-spacing:0.000px;">Upper Face Angle: 0°</span>
<span class="t" style="left:864.90px;top:273.00px;font-size:8.58px;color:#111;letter-spacing:0.000px;">Bench Width: 7.5 m</span>
<span class="t" style="left:864.90px;top:283.00px;font-size:8.58px;color:#111;letter-spacing:0.000px;">Wedge Height: 5.92537 m</span>
<span class="t" style="left:864.90px;top:293.00px;font-size:8.58px;color:#111;letter-spacing:0.000px;">Waviness: 0°</span>
<span class="t" style="left:864.90px;top:304.00px;font-size:8.58px;color:#111;letter-spacing:0.000px;">Upper Face Length: 7.5 m</span>
<span class="t" style="left:864.90px;top:314.00px;font-size:8.58px;color:#111;letter-spacing:0.000px;">Failure Plane Length: 11.8507 m</span>
<span class="t" style="left:864.90px;top:325.00px;font-size:8.58px;color:#111;letter-spacing:0.000px;">Wedge Slope Length: 6.53793 m</span>
<span class="t" style="left:865.60px;top:346.00px;font-size:10.3px;color:#1e1e1e;font-weight:bold;letter-spacing:-0.093px;">Strength</span>
<span class="t" style="left:864.90px;top:359.00px;font-size:8.58px;color:#111;letter-spacing:0.000px;">Shear Strength Model: Mohr-</span>
<span class="t" style="left:864.90px;top:369.00px;font-size:8.58px;color:#111;letter-spacing:0.000px;">Coulomb</span>
<span class="t" style="left:864.90px;top:379.00px;font-size:8.58px;color:#111;letter-spacing:0.000px;">Friction Angle: 35°</span>
<span class="t" style="left:864.90px;top:390.00px;font-size:8.58px;color:#111;letter-spacing:0.000px;">Cohesion: 0 kPa</span>
<span class="t" style="left:864.90px;top:400.00px;font-size:8.58px;color:#111;letter-spacing:0.000px;">Shear Strength: 29.5619 kPa</span>
<span class="t" style="left:864.90px;top:411.00px;font-size:8.58px;color:#111;letter-spacing:0.000px;">Shear Resistance: 350.33 kN/m</span>
</div></body></html>
